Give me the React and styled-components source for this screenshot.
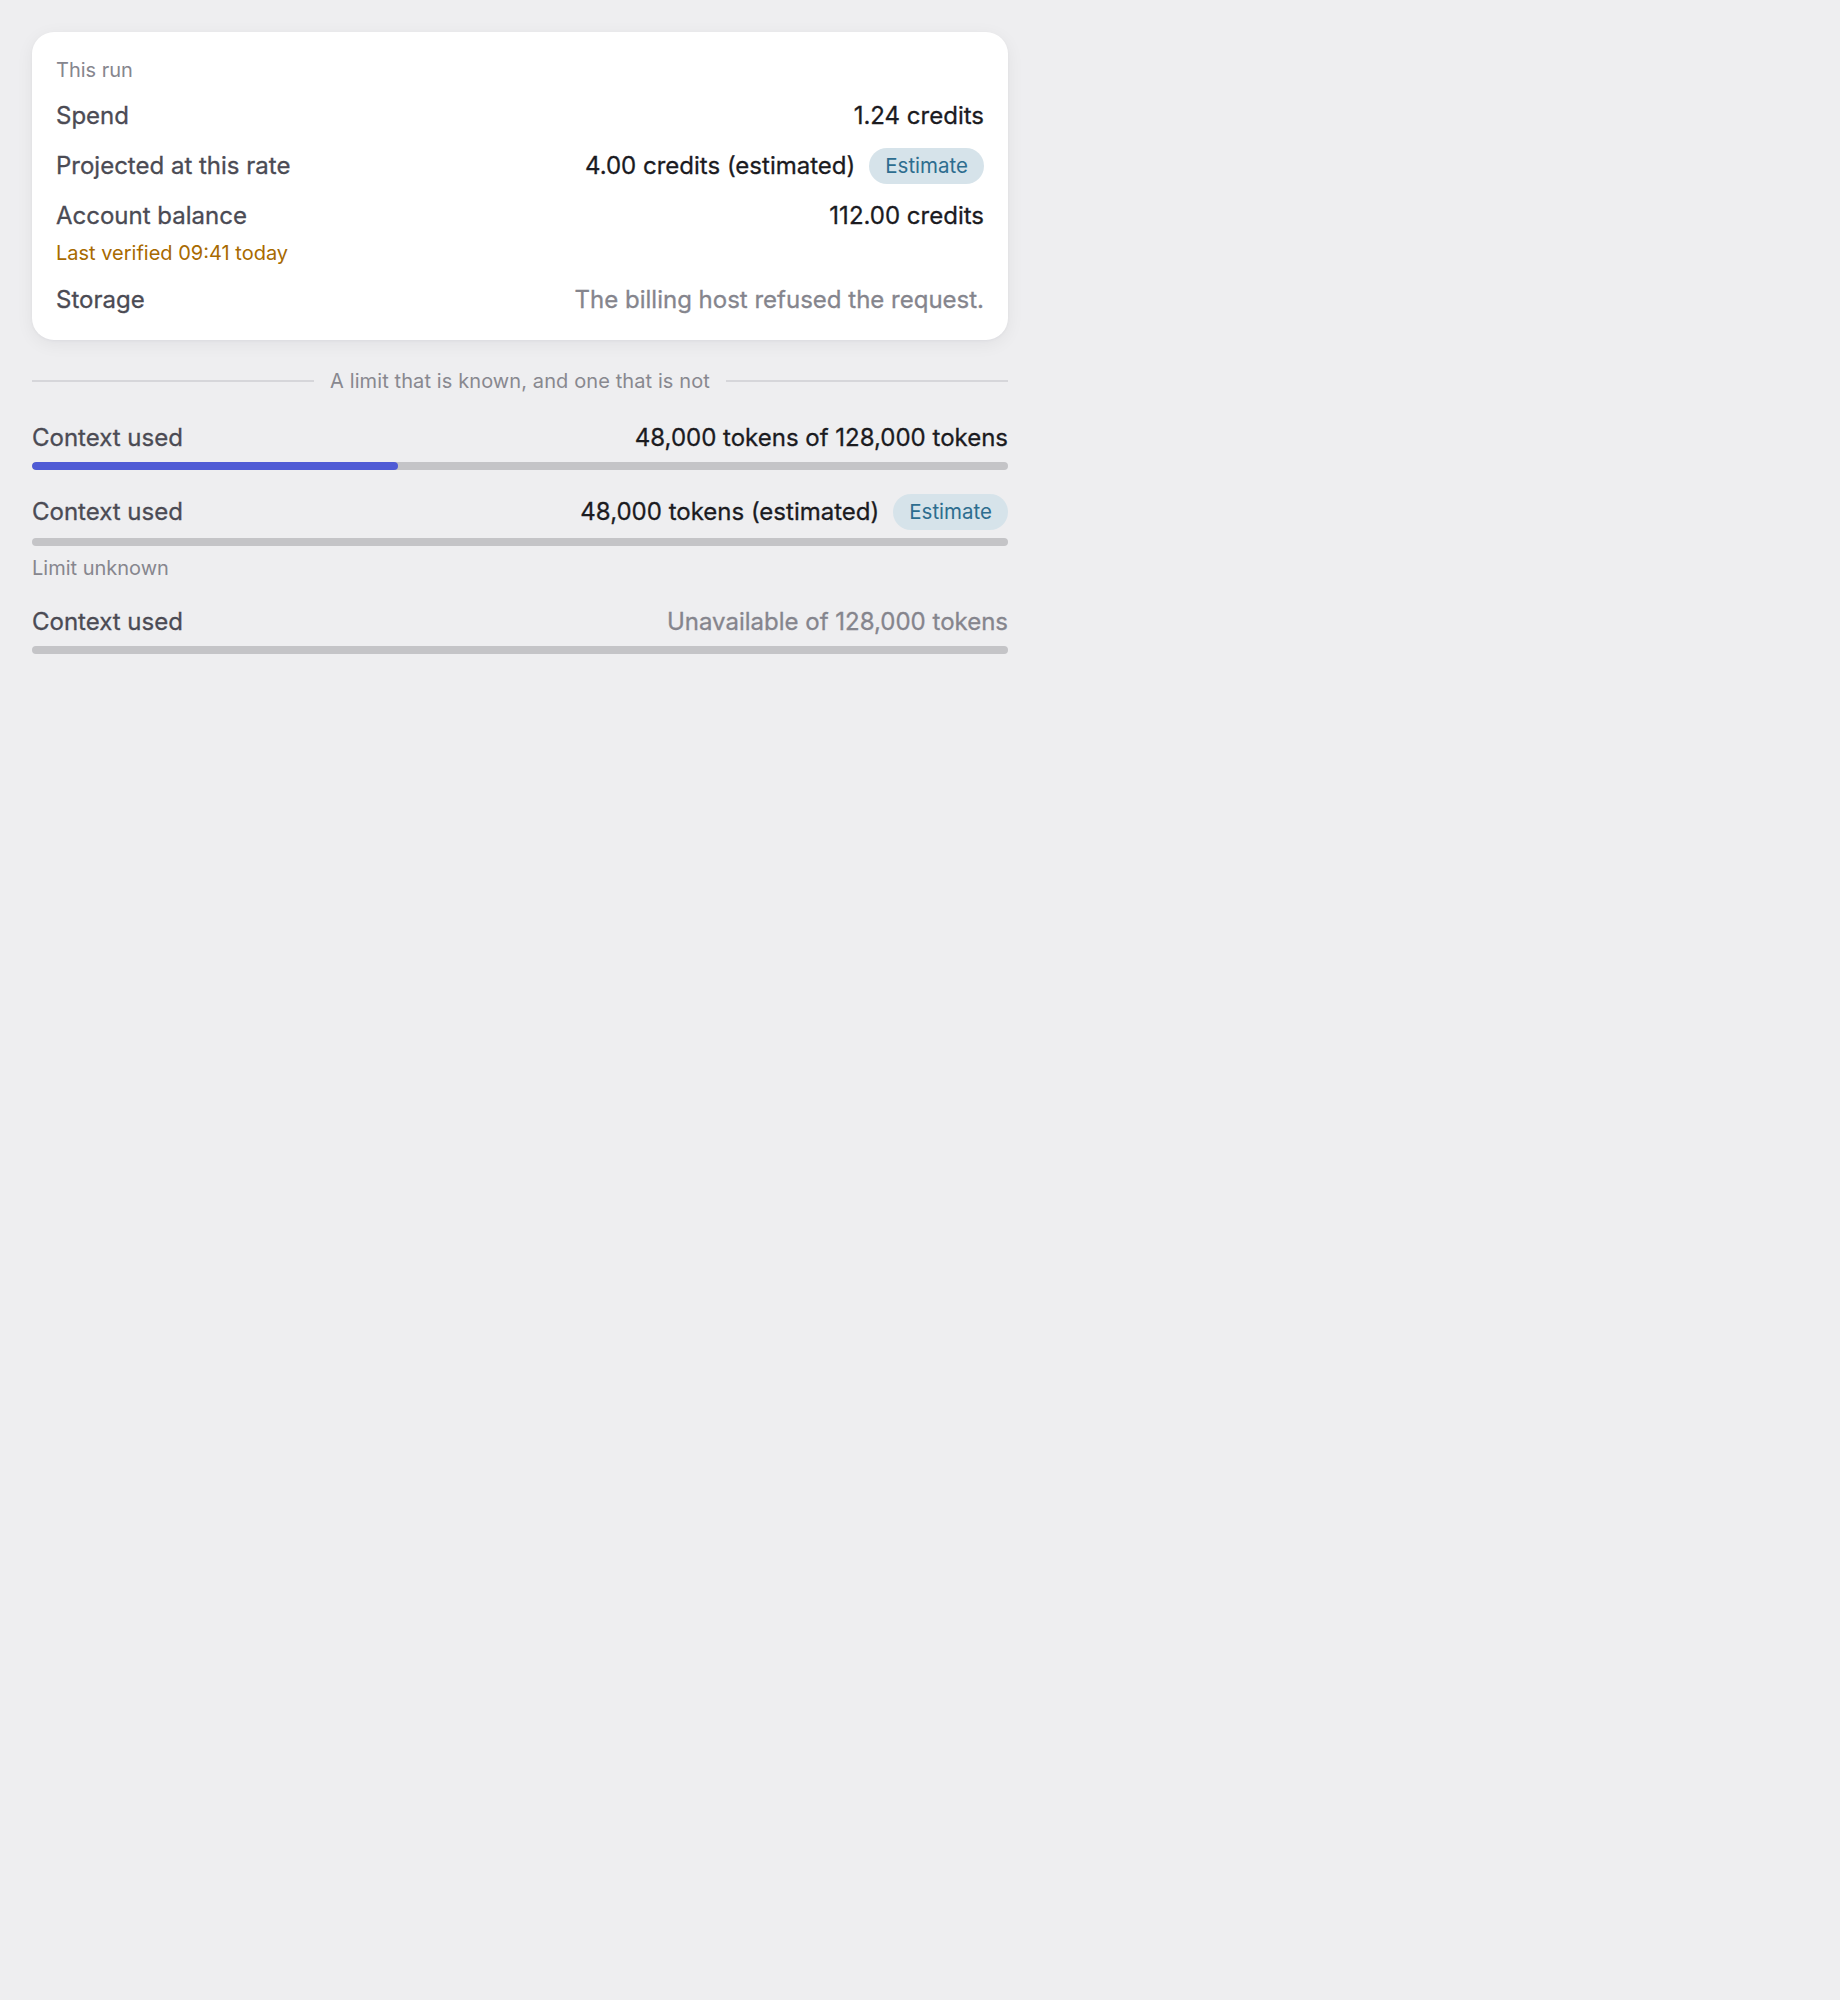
import React from "react";
import styled, { createGlobalStyle } from "styled-components";

const GlobalStyle = createGlobalStyle`
  body {
    margin: 0;
    background: #eeeef0;
    font-family: Inter, "Noto Sans", sans-serif;
  }
`;

const Page = styled.div`
  padding: 32px;
  width: 976px;
  display: flex;
  flex-direction: column;
`;

const Card = styled.section`
  background: #ffffff;
  border-radius: 22px;
  box-shadow: 0 4px 18px rgba(20, 20, 40, 0.06), 0 1px 3px rgba(20, 20, 40, 0.04);
  padding: 24px;
  display: flex;
  flex-direction: column;
  gap: 16px;
`;

const Eyebrow = styled.div`
  font-size: 20px;
  line-height: 28px;
  color: #86868e;
`;

const Row = styled.div`
  display: flex;
  align-items: center;
  justify-content: space-between;
  min-height: 32px;
`;

const Label = styled.span`
  font-size: 24px;
  line-height: 32px;
  font-weight: 400;
  color: #4b4b54;
  -webkit-text-stroke: 0.3px #4b4b54;
`;

const Value = styled.span`
  display: flex;
  align-items: center;
  gap: 14px;
  font-size: 24px;
  line-height: 32px;
  font-weight: 400;
  color: ${(p) => (p.$muted ? "#85858d" : "#1b1b1f")};
  -webkit-text-stroke: 0.3px ${(p) => (p.$muted ? "#85858d" : "#1b1b1f")};
`;

const Badge = styled.span`
  display: inline-flex;
  align-items: center;
  height: 36px;
  padding: 0 16px;
  border-radius: 18px;
  background: #d6e3ea;
  color: #2d6d8f;
  font-size: 20.5px;
  font-weight: 400;
  -webkit-text-stroke: 0;
`;

const Stack = styled.div`
  display: flex;
  flex-direction: column;
`;

const Note = styled.div`
  font-size: 20px;
  line-height: ${(p) => p.$lh || 28}px;
  margin-top: ${(p) => p.$mt || 0}px;
  color: ${(p) => (p.$warn ? "#a86a00" : "#86868e")};
`;

const Divider = styled.div`
  display: flex;
  align-items: center;
  gap: 16px;
  margin: 26px 0;
  font-size: 20px;
  line-height: 30px;
  letter-spacing: 0.1px;
  color: #88888f;

  &::before,
  &::after {
    content: "";
    flex: 1;
    height: 2px;
    background: #d6d6da;
  }
`;

const Meters = styled.div`
  display: flex;
  flex-direction: column;
  gap: 24px;
`;

const Track = styled.div`
  margin-top: 8px;
  height: 8px;
  border-radius: 4px;
  background: #c4c4c7;
  overflow: hidden;
`;

const Fill = styled.div`
  height: 100%;
  border-radius: 4px;
  background: #4f5bd5;
`;

const Meter = ({ value, muted, estimate, used, limit, note }) => (
  <Stack>
    <Row>
      <Label>Context used</Label>
      <Value $muted={muted}>
        {value}
        {estimate && <Badge>Estimate</Badge>}
      </Value>
    </Row>
    <Track>
      {used != null && limit && (
        <Fill style={{ width: `${(used / limit) * 100}%` }} />
      )}
    </Track>
    {note && <Note $mt={8}>{note}</Note>}
  </Stack>
);

export default function App() {
  return (
    <>
      <GlobalStyle />
      <Page>
        <Card>
          <Eyebrow>This run</Eyebrow>
          <Row>
            <Label>Spend</Label>
            <Value>1.24 credits</Value>
          </Row>
          <Row>
            <Label>Projected at this rate</Label>
            <Value>
              4.00 credits (estimated)
              <Badge>Estimate</Badge>
            </Value>
          </Row>
          <Stack>
            <Row>
              <Label>Account balance</Label>
              <Value>112.00 credits</Value>
            </Row>
            <Note $warn $mt={6} $lh={30}>
              Last verified 09:41 today
            </Note>
          </Stack>
          <Row>
            <Label>Storage</Label>
            <Value $muted>The billing host refused the request.</Value>
          </Row>
        </Card>

        <Divider>A limit that is known, and one that is not</Divider>

        <Meters>
          <Meter value="48,000 tokens of 128,000 tokens" used={48000} limit={128000} />
          <Meter value="48,000 tokens (estimated)" estimate note="Limit unknown" />
          <Meter value="Unavailable of 128,000 tokens" muted />
        </Meters>
      </Page>
    </>
  );
}
